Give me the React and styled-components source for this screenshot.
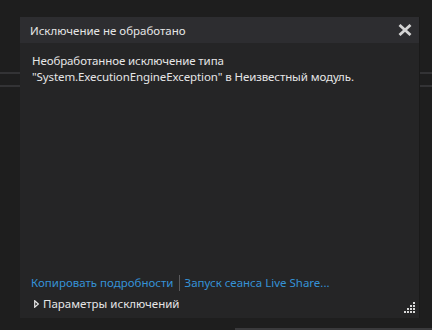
import styled, { createGlobalStyle } from 'styled-components'

const Global = createGlobalStyle`
    html, body {
        margin: 0;
        padding: 0;
        background: #1e1e1e;
    }
    * {
        box-sizing: border-box;
    }
`

const Screen = styled.div`
    position: relative;
    width: 432px;
    height: 330px;
    overflow: hidden;
    padding: 17px 13px 0 20px;
    font-family: "Segoe UI", "Noto Sans", "Open Sans", sans-serif;
    background: #1e1e1e;
`

const EditorLine = styled.div`
    position: absolute;
    left: 0;
    right: 0;
    top: ${({ top }) => top}px;
    height: 2px;
    background: #333335;
`

const BottomBar = styled.div`
    position: absolute;
    left: 235px;
    right: 0;
    top: 328px;
    height: 2px;
    background: #3a3a3c;
`

const Dialog = styled.div`
    position: relative;
    z-index: 1;
    display: flex;
    flex-direction: column;
    width: 399px;
    height: 301px;
    background: #252526;
    box-shadow: 1px 0 0 #1a1a1a;
`

const TitleBar = styled.div`
    display: flex;
    align-items: center;
    justify-content: space-between;
    height: 26px;
    padding: 0 4px 0 10px;
    background: #2d2d30;
`

const Title = styled.span`
    font-size: 11.5px;
    color: #e6e6e6;
`

const Close = styled.button`
    display: flex;
    align-items: center;
    justify-content: center;
    width: 20px;
    height: 20px;
    padding: 0;
    border: none;
    background: transparent;
`

const Body = styled.div`
    flex: 1;
    display: flex;
    flex-direction: column;
    padding: 10px 10px 6px 12px;
`

const Message = styled.p`
    flex: 1;
    margin: 0;
    font-size: 11.5px;
    line-height: 16px;
    color: #e6e6e6;
    letter-spacing: -0.1px;
`

const Links = styled.div`
    display: flex;
    align-items: center;
    gap: 5px;
    margin-left: -1px;
    font-size: 11.5px;
    line-height: 16px;
`

const Link = styled.a`
    color: #3592d6;
    text-decoration: none;
    cursor: pointer;
`

const Divider = styled.span`
    width: 1px;
    height: 16px;
    background: #5a5a5c;
`

const Footer = styled.div`
    display: flex;
    align-items: flex-end;
    justify-content: space-between;
    margin-top: 5px;
`

const Toggle = styled.div`
    display: flex;
    align-items: center;
    gap: 4px;
    margin-left: 2px;
    font-size: 11.5px;
    line-height: 16px;
    color: #e6e6e6;
`

const Grip = styled.div`
    display: grid;
    grid-template-columns: repeat(4, 2px);
    grid-template-rows: repeat(4, 2px);
    gap: 1px;
    margin-right: -6px;
    margin-bottom: -1px;
`

const Dot = styled.span`
    width: 2px;
    height: 2px;
    background: ${({ on }) => on ? '#d8d8d8' : 'transparent'};
`

const gripDots = [
    0, 0, 0, 1,
    0, 0, 1, 1,
    0, 1, 1, 1,
    1, 1, 1, 1,
]

export default function App() {
    return (
        <Screen>
            <Global />
            <EditorLine top={72} />
            <EditorLine top={85} />
            <BottomBar />
            <Dialog>
                <TitleBar>
                    <Title>Исключение не обработано</Title>
                    <Close>
                        <svg width="14" height="12" viewBox="0 0 14 12">
                            <path d="M1.5 1 L12.5 11 M12.5 1 L1.5 11" stroke="#d4d4d4" strokeWidth="2.8" />
                        </svg>
                    </Close>
                </TitleBar>
                <Body>
                    <Message>
                        Необработанное исключение типа<br />
                        "System.ExecutionEngineException" в Неизвестный модуль.
                    </Message>
                    <Links>
                        <Link>Копировать подробности</Link>
                        <Divider />
                        <Link>Запуск сеанса Live Share...</Link>
                    </Links>
                    <Footer>
                        <Toggle>
                            <svg width="5" height="8" viewBox="0 0 5 8">
                                <path d="M0.7 0.8 L4.3 4 L0.7 7.2 Z" fill="none" stroke="#e6e6e6" strokeWidth="1.2" />
                            </svg>
                            Параметры исключений
                        </Toggle>
                        <Grip>
                            {gripDots.map((on, i) => <Dot key={i} on={on} />)}
                        </Grip>
                    </Footer>
                </Body>
            </Dialog>
        </Screen>
    )
}
